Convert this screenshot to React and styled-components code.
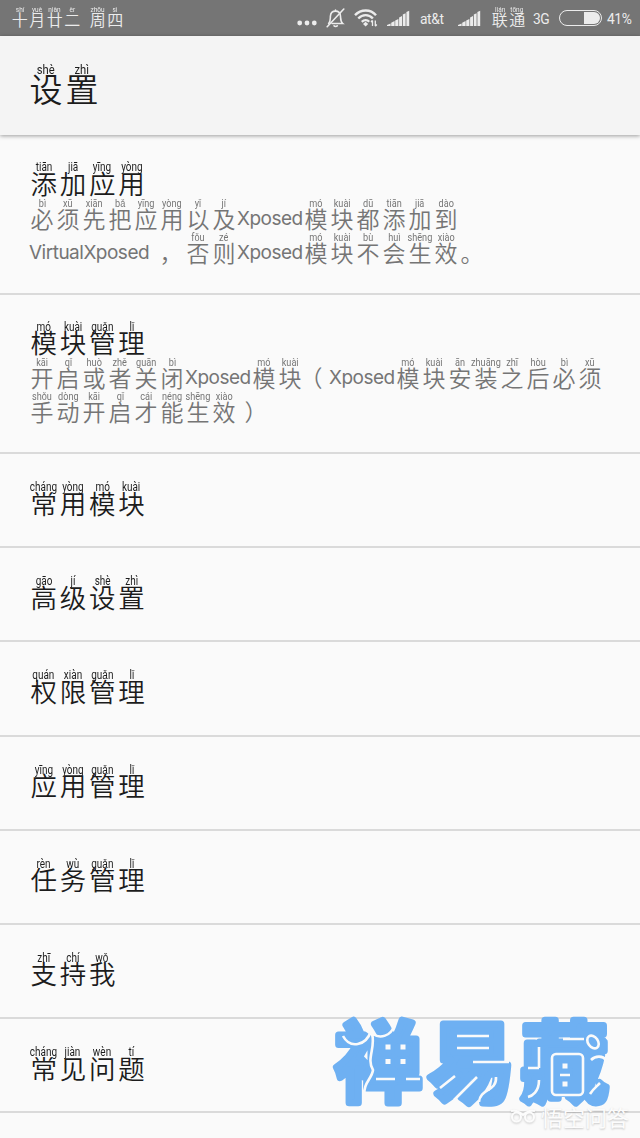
import styled, { createGlobalStyle } from "styled-components";

const GlobalStyle = createGlobalStyle`
  * {
    box-sizing: border-box;
  }
  body {
    margin: 0;
    background: #fafafa;
    font-family: "Liberation Sans", "Noto Sans CJK SC", sans-serif;
    overflow: hidden;
  }
`;

// entries are [hanzi, pinyin, shift] or { latin, width } for a plain run
const addApps = [
  [
    ["必", "bì"], ["须", "xū"], ["先", "xiān"], ["把", "bǎ"],
    ["应", "yīng"], ["用", "yòng"], ["以", "yǐ"], ["及", "jí"],
    { latin: "Xposed", width: 66 },
    ["模", "mó"], ["块", "kuài"], ["都", "dū"],
    ["添", "tiān"], ["加", "jiā"], ["到", "dào"],
  ],
  [
    { latin: "VirtualXposed", width: 126 },
    ["，", "", 3],
    { latin: " ", width: 4 },
    ["否", "fǒu"], ["则", "zé"],
    { latin: "Xposed", width: 66 },
    ["模", "mó"], ["块", "kuài"], ["不", "bù"], ["会", "huì"],
    ["生", "shēng"], ["效", "xiào"], ["。", ""],
  ],
];

const manageModules = [
  [
    ["开", "kāi"], ["启", "qǐ"], ["或", "huò"],
    ["者", "zhě"], ["关", "guān"], ["闭", "bì"],
    { latin: "Xposed", width: 66 },
    ["模", "mó"], ["块", "kuài"], ["（", "", -5],
    { latin: "Xposed", width: 66 },
    ["模", "mó"], ["块", "kuài"], ["安", "ān"], ["装", "zhuāng"],
    ["之", "zhī"], ["后", "hòu"], ["必", "bì"], ["须", "xū"],
  ],
  [
    ["手", "shǒu"], ["动", "dòng"], ["开", "kāi"], ["启", "qǐ"],
    ["才", "cái"], ["能", "néng"], ["生", "shēng"], ["效", "xiào"], ["）", "", 6],
  ],
];

const settings = [
  {
    title: [["添", "tiān"], ["加", "jiā"], ["应", "yīng"], ["用", "yòng"]],
    lines: addApps,
  },
  {
    title: [["模", "mó"], ["块", "kuài"], ["管", "guǎn"], ["理", "lǐ"]],
    lines: manageModules,
  },
  { title: [["常", "cháng"], ["用", "yòng"], ["模", "mó"], ["块", "kuài"]] },
  { title: [["高", "gāo"], ["级", "jí"], ["设", "shè"], ["置", "zhì"]] },
  { title: [["权", "quán"], ["限", "xiàn"], ["管", "guǎn"], ["理", "lǐ"]] },
  { title: [["应", "yīng"], ["用", "yòng"], ["管", "guǎn"], ["理", "lǐ"]] },
  { title: [["任", "rèn"], ["务", "wù"], ["管", "guǎn"], ["理", "lǐ"]] },
  { title: [["支", "zhī"], ["持", "chí"], ["我", "wǒ"]] },
  { title: [["常", "cháng"], ["见", "jiàn"], ["问", "wèn"], ["题", "tí"]] },
];

const sizes = {
  status: { cell: 17.5, hanzi: 16, hanziLine: 13.5, pinyin: 7.8, pinyinLine: 7.5 },
  header: { cell: 36, hanzi: 33, hanziLine: 28, pinyin: 13.5, pinyinLine: 10 },
  title: { cell: 29.3, hanzi: 26.5, hanziLine: 22, pinyin: 12, pinyinLine: 8.5 },
  text: { cell: 26, hanzi: 23, hanziLine: 20, pinyin: 11, pinyinLine: 8 },
};

const Pinyin = ({ items, size }) => (
  <Line>
    {items.map((item, i) =>
      item.latin ? (
        <Latin key={i} $width={item.width}>
          {item.latin}
        </Latin>
      ) : (
        <Cell key={i} $size={sizes[size]} $shift={item[2] || 0}>
          <small>{item[1]}</small>
          <b>{item[0]}</b>
        </Cell>
      )
    )}
  </Line>
);

const Signal = () => (
  <svg width="23" height="17" viewBox="0 0 23 17" fill="#ececec">
    <path d="M0 16V15L3.6 13.6V16zM4.2 16V12.8L7.6 11V16zM8.2 16V10.5L11.4 9V16zM12.1 16V7.5L15 6V16zM15.8 16V4.5L18.6 3.2V16zM19.4 16V2L22.2 .8V16z" />
  </svg>
);

const App = () => {
  return (
    <Screen>
      <GlobalStyle />
      <StatusBar>
        <DateText>
          <Pinyin
            size="status"
            items={[["十", "shí"], ["月", "yuè"], ["廿", "niàn"], ["二", "èr"]]}
          />
          <Pinyin size="status" items={[["周", "zhōu"], ["四", "sì"]]} />
        </DateText>
        <Dots width="20" height="17" viewBox="0 0 20 17">
          <circle cx="2.7" cy="13" r="2.4" />
          <circle cx="10" cy="13" r="2.4" />
          <circle cx="17.3" cy="13" r="2.4" />
        </Dots>
        <Bell width="19" height="20" viewBox="0 0 19 20">
          <path d="M2.6 15.5C4.7 13.5 4.2 11 4.4 8.2C4.6 4.9 6.5 3.1 9.5 3.1C12.6 3.1 14.3 5 14.5 8.2C14.7 11 14.5 13.6 16.7 15.5H6" />
          <path d="M8 17.8C8.7 18.8 10.6 18.8 11.3 17.8M9.5 3V2M17.8 1L1.2 18.7" />
        </Bell>
        <Wifi width="24" height="18" viewBox="0 0 24 18">
          <path d="M1 6.2C7-.1 16.6-.1 22 6.2M4.3 9.5C8.6 5 14.7 5 18.9 9.5M7.8 12.8C10.2 10.5 13.2 10.5 15.2 12.8" />
          <path className="dot" d="M9 15L11.6 12.8L14.2 15L11.6 17.5z" />
          <path className="arrows" d="M18.5 17V11.5M17 13L18.5 11.3M21.3 11.5V17M22.8 15.5L21.3 17.2" />
        </Wifi>
        <Signal />
        <Carrier $width={29}>at&amp;t</Carrier>
        <Signal />
        <Operator>
          <Pinyin size="status" items={[["联", "lián"], ["通", "tōng"]]} />
        </Operator>
        <Carrier $width={17}>3G</Carrier>
        <Battery>
          <i />
        </Battery>
        <Carrier $width={23}>41%</Carrier>
      </StatusBar>
      <Header>
        <Pinyin size="header" items={[["设", "shè"], ["置", "zhì"]]} />
      </Header>
      <List>
        {settings.map((row, i) => (
          <Row key={i} $tall={!!row.lines}>
            <Pinyin size="title" items={row.title} />
            {row.lines && (
              <Summary>
                {row.lines.map((line, n) => (
                  <Pinyin key={n} size="text" items={line} />
                ))}
              </Summary>
            )}
          </Row>
        ))}
      </List>
      <Stamp width="300" height="138" viewBox="0 -28 300 138">
        <text x="7" y="81">禅</text>
        <text x="100" y="81">易</text>
        <text x="193" y="81">藏</text>
        {/* light creases that separate the fat strokes */}
        <g>
          <path d="M15 22C22 35 38 32 43 17M44 20C48 33 38 45 45 56C44 65 35 68 36 84M45 20C52 25 63 22 66 12M48 65H67M78 65H92" />
          <path d="M57.5 33H62.5M72.5 33H77.5M57.5 47.5H62.5M72.5 47.5H77.5" className="wide" />
          <path d="M129 22H161M129 34H161M145 48H181M127 62L112 74M149 63L126 86M168 63C169 78 152 74 151 88" />
          <rect x="224" y="40" width="31" height="41" rx="4" />
          <path d="M211 33V54M200 54H211M211 66C211 78 204 82 200 83M235 25H256M263 46C268 41 275 42 278 46M262 80C265 75 268 73 272 69M232 61H242" />
          <ellipse cx="265" cy="28" rx="5" ry="7" transform="rotate(-35 265 28)" />
          <path d="M234.5 52H239.5M234.5 70H239.5" className="wide" />
        </g>
      </Stamp>
      <Source>
        <svg width="28" height="16" viewBox="0 0 28 16">
          <path d="M2 3C6 2 10 3 14 7C18 3 22 2 26 3" />
          <circle cx="7.5" cy="9" r="4.5" />
          <circle cx="20.5" cy="9" r="4.5" />
        </svg>
        悟空问答
      </Source>
    </Screen>
  );
};

const Screen = styled.div`
  position: relative;
  width: 640px;
  height: 1138px;
  overflow: hidden;
  background-color: #fafafa;
`;

const Line = styled.div`
  display: flex;
  flex: none;
  align-items: flex-end;
  white-space: pre;
`;

const Cell = styled.span`
  display: flex;
  flex: none;
  flex-direction: column;
  align-items: center;
  width: ${({ $size }) => $size.cell}px;
  small {
    height: ${({ $size }) => $size.pinyinLine}px;
    line-height: ${({ $size }) => $size.pinyinLine}px;
    font-family: Roboto, "Liberation Sans", sans-serif;
    font-size: ${({ $size }) => $size.pinyin}px;
    transform: scaleX(0.83);
  }
  b {
    font-family: "Noto Sans CJK SC", sans-serif;
    font-weight: 350;
    height: ${({ $size }) => $size.hanziLine}px;
    line-height: ${({ $size }) => $size.hanziLine}px;
    font-size: ${({ $size }) => $size.hanzi}px;
    transform: translateX(${({ $shift }) => $shift}px);
  }
`;

const Latin = styled.span`
  flex: none;
  width: ${({ $width }) => $width}px;
  font-family: Inter, sans-serif;
  font-weight: 400;
  font-size: 19px;
  line-height: 19px;
  letter-spacing: -0.5px;
`;

const StatusBar = styled.div`
  display: flex;
  align-items: center;
  height: 36px;
  padding: 0 10px 0 11px;
  background-color: #757575;
  color: #ececec;
  > svg {
    flex: none;
    margin-right: 9px;
  }
  > svg:nth-of-type(4),
  > svg:nth-of-type(5) {
    margin-right: 10px;
  }
`;

const DateText = styled.div`
  display: flex;
  gap: 8px;
  margin-right: auto;
  padding-bottom: 4px;
`;

const Operator = styled.div`
  margin-right: 7px;
  padding-bottom: 4px;
`;

const Dots = styled.svg`
  fill: #ececec;
`;

const Bell = styled.svg`
  fill: none;
  stroke: #ececec;
  stroke-width: 1.6;
  stroke-linecap: round;
`;

const Wifi = styled.svg`
  fill: none;
  stroke: #ececec;
  stroke-width: 2.4;
  .dot {
    fill: #ececec;
    stroke: none;
  }
  .arrows {
    stroke-width: 1.3;
  }
`;

const Carrier = styled.span`
  flex: none;
  width: ${({ $width }) => $width}px;
  margin-right: 9px;
  padding-top: 1px;
  font-family: Roboto, sans-serif;
  font-size: 13.8px;
  line-height: 18px;
  letter-spacing: -0.4px;
  white-space: nowrap;
  &:last-child {
    margin-right: 0;
  }
`;

const Battery = styled.div`
  flex: none;
  width: 43px;
  height: 16px;
  margin-right: 5px;
  border: 1.5px solid #ececec;
  border-radius: 8px;
  padding: 1px;
  display: flex;
  justify-content: flex-end;
  i {
    width: 16px;
    background-color: #ececec;
    border-radius: 0 6px 6px 0;
  }
`;

const Header = styled.header`
  position: relative;
  height: 99px;
  padding: 28px 28px 0;
  background-color: #f4f4f4;
  color: #1c1c1c;
  box-shadow: 0 1px 4px rgba(0, 0, 0, 0.38);
`;

const List = styled.main`
  display: flex;
  flex-direction: column;
`;

const Row = styled.section`
  height: ${({ $tall }) => ($tall ? 159.5 : 94.2)}px;
  flex: none;
  padding: ${({ $tall }) => ($tall ? 28 : 29)}px 29px 0;
  border-bottom: 2px solid #dadada;
  color: #1c1c1c;
`;

const Summary = styled.div`
  display: flex;
  flex-direction: column;
  gap: 6px;
  padding-top: 6px;
  color: #757575;
`;

const Stamp = styled.svg`
  position: absolute;
  left: 328px;
  top: 986px;
  fill: #6eb0f2;
  stroke: #6eb0f2;
  stroke-width: 7px;
  stroke-linejoin: round;
  font-family: "Noto Sans CJK SC", sans-serif;
  font-weight: 700;
  font-size: 87px;
  g {
    fill: none;
    stroke: #fafafa;
    stroke-width: 2.6px;
  }
  .wide {
    stroke-width: 5px;
  }
`;

const Source = styled.div`
  position: absolute;
  left: 509px;
  top: 1104px;
  display: flex;
  align-items: center;
  gap: 4px;
  color: #fcfcfc;
  font-family: "Noto Sans CJK SC", sans-serif;
  font-size: 22px;
  line-height: 24px;
  text-shadow: 0 1px 2px rgba(0, 0, 0, 0.22);
  svg {
    fill: none;
    stroke: #fcfcfc;
    stroke-width: 2;
    filter: drop-shadow(0 1px 1px rgba(0, 0, 0, 0.2));
  }
`;

export default App;
